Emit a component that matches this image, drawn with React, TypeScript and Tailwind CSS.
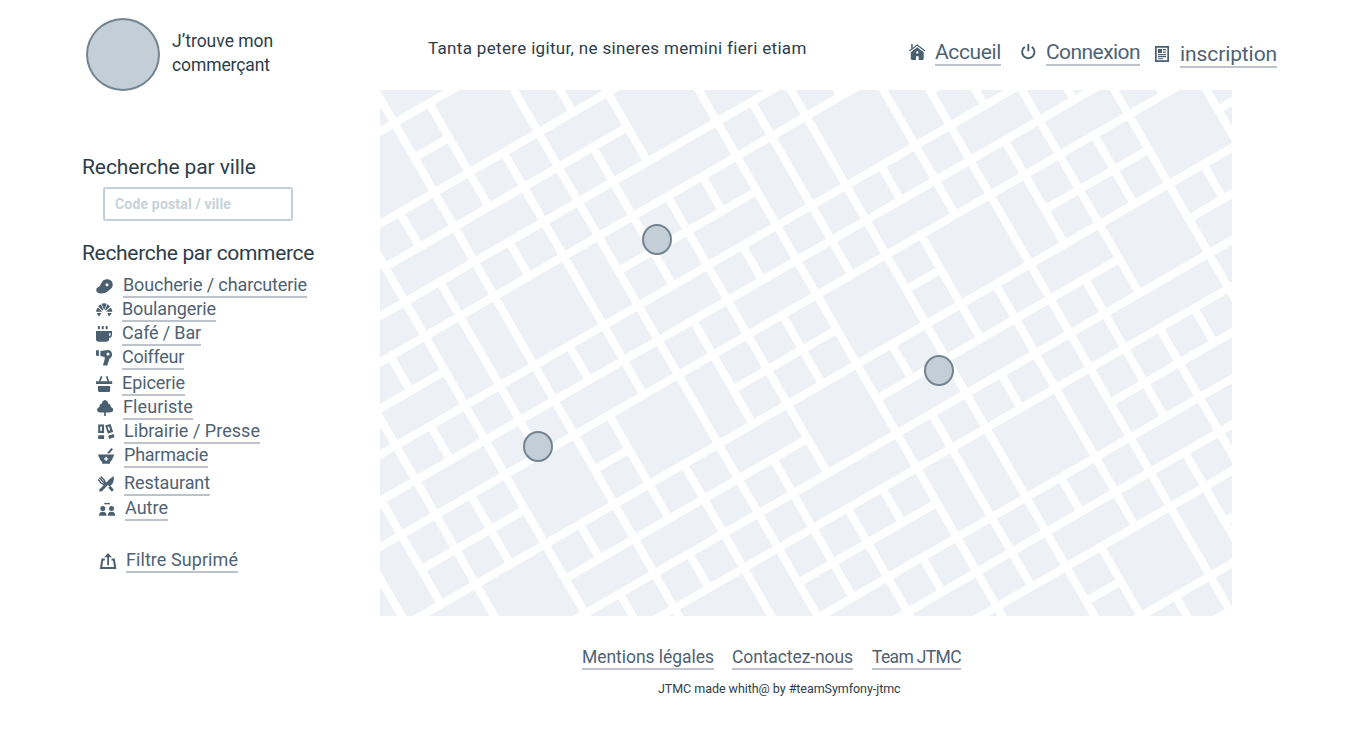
import type { ReactNode } from "react";

type Block = [number, number, number, number];

/* City blocks of one 9 × 9 tile: column, row, width, height in cells. */
const TILE: Block[] = [
  [0, 0, 2, 2], [2, 0, 1, 2], [3, 0, 1, 1], [4, 0, 1, 1], [5, 0, 1, 1], [6, 0, 2, 2], [8, 0, 1, 1],
  [3, 1, 1, 1], [4, 1, 1, 1], [5, 1, 1, 1], [8, 1, 1, 1],
  [0, 2, 1, 1], [1, 2, 1, 1], [2, 2, 2, 1], [4, 2, 2, 2], [6, 2, 1, 1], [7, 2, 1, 1], [8, 2, 1, 1],
  [1, 3, 1, 1], [2, 3, 1, 1], [3, 3, 1, 1], [6, 3, 2, 1], [8, 3, 2, 1],
  [0, 4, 1, 1], [1, 4, 1, 1], [2, 4, 1, 1], [3, 4, 3, 1], [6, 4, 1, 1], [7, 4, 1, 1], [8, 4, 1, 1],
  [8, 5, 2, 2], [1, 5, 1, 2], [2, 5, 1, 1], [3, 5, 1, 1], [4, 5, 1, 1], [5, 5, 1, 1], [6, 5, 1, 2], [7, 5, 1, 2],
  [2, 6, 1, 1], [3, 6, 1, 1], [4, 6, 2, 1],
  [0, 7, 1, 1], [1, 7, 1, 1], [2, 7, 2, 1], [4, 7, 1, 1], [5, 7, 1, 1], [6, 7, 1, 1], [7, 7, 1, 1], [8, 7, 1, 1],
  [8, 8, 2, 1], [1, 8, 1, 1], [2, 8, 1, 1], [3, 8, 1, 1], [4, 8, 2, 1], [6, 8, 1, 1], [7, 8, 1, 1],
];

const CELL = 40;
const ROAD = 8;
const REPEATS = [-2, -1, 0, 1, 2];

function CityMap() {
  return (
    <svg width="852" height="526" viewBox="0 0 852 526" className="block">
      <g transform="translate(540.8 144.9) rotate(-30)" fill="#edf0f5">
        {REPEATS.flatMap((a) =>
          REPEATS.flatMap((b) =>
            TILE.map(([i, j, w, h]) => (
              <rect
                key={`${a}.${b}.${i}.${j}`}
                x={(a * 9 + i) * CELL + ROAD / 2}
                y={(b * 9 + j) * CELL + ROAD / 2}
                width={w * CELL - ROAD}
                height={h * CELL - ROAD}
              />
            )),
          ),
        )}
      </g>
    </svg>
  );
}

function Pin({ place }: { place: string }) {
  return <div className={`absolute h-[31px] w-[30px] rounded-[50%] border-2 border-[#738491] bg-[#c3ced7] ${place}`} />;
}

function Icon({ children, className = "" }: { children: ReactNode; className?: string }) {
  return (
    <svg width="17" height="17" viewBox="0 0 17 17" fill="#4a5f6f" className={`block shrink-0 overflow-visible ${className}`}>
      {children}
    </svg>
  );
}

const meat = (
  <path
    fillRule="evenodd"
    d="M11 .2C14.600.2 16.700 2.500 16.700 5.700c0 3.400-2.400 4.300-4 5.700-1.900 1.700-4.200 3.100-7.700 3.100C1.800 14.500.2 12.900.2 11c0-2.600 2.600-2.700 3.900-4.600C5.700 4 6.300.2 11 .2ZM11 4.200a1.500 1.500 0 1 0 0 3 1.500 1.500 0 0 0 0-3Z"
  />
);
const croissant = (
  <>
    <path d="M0 8.800C.3 7 .8 5.600 1.700 4.400L6 8.300 5.700 8.800ZM16.400 8.800c-.3-1.800-.8-3.200-1.700-4.400l-4.300 3.900.3.500Z" />
    <path d="M2.300 3.600C3 2.600 3.900 1.800 5 1.200L7.400 6.900C7 7.100 6.700 7.300 6.500 7.600ZM14.100 3.600c-.7-1-1.600-1.800-2.700-2.400L9 6.900c.4.2.7.4.9.7Z" />
    <path d="M5.700.8Q8.200-.2 10.700.8L8.500 6.600H7.900Z" />
    <path d="M.9 10h4.200l-1.300 3C2.200 12.800 1.200 11.500.9 10ZM15.500 10h-4.200l1.300 3c1.600-.2 2.600-1.500 2.900-3Z" />
  </>
);
const cup = (
  <>
    <path d="M1.900 0h1.900v3.200H1.900ZM5.800 0h1.900v3.200H5.800ZM9.700 0h1.900v3.200H9.700Z" />
    <path fillRule="evenodd" d="M0 5h13.300v.1H16v3.500c0 2.300-1 3.400-2.900 3.400v1c0 1.700-1.200 2.800-2.900 2.800H2.900C1.200 15.800 0 14.700 0 13ZM13.200 7v3.200c1 0 1.300-.5 1.300-1.400V7Z" />
  </>
);
const dryer = (
  <>
    <path d="M0 .3h2.900v6L0 5.500Z" />
    <path fillRule="evenodd" d="M4.400 1 11.400 0c2.700-.2 4.700 1.800 4.700 4.500 0 2-1.100 3.500-2.700 4.300L11.300 15.500H6.900L8.700 9.200V7L4.400 6ZM12 2.600a1.500 1.500 0 1 0 0 3 1.500 1.500 0 0 0 0-3Z" />
  </>
);
const basket = (
  <>
    <path d="M0 5.300h16.200v2.600H0ZM2 10h12.200v4.200c0 1.100-.6 1.800-1.700 1.800H3.700C2.600 16 2 15.300 2 14.200Z" />
    <path d="M5.600.3 3.700 5.500M10.600.3l1.900 5.200" stroke="#4a5f6f" strokeWidth="1.7" />
  </>
);
const tree = (
  <path d="M8 0c1.900.4 3.100 1.600 3.200 3.400 1.800.5 2.800 1.900 2.500 3.500 1.600.6 2.500 1.500 2.500 2.900 0 1.700-1.500 2.800-3.800 2.800H8.900V16H7.200v-3.400H3.800C1.500 12.600 0 11.500 0 9.800c0-1.400.9-2.300 2.500-2.900C2.200 5.300 3.200 3.900 4.800 3.400 5 1.600 6.200.4 8 0Z" />
);
const books = (
  <>
    <path fillRule="evenodd" d="M.2.5h5.900v8.600H.2ZM2.200 2.500v4.200h1.800V2.500ZM.2 11.200h5.900v3.800H.2Z" />
    <path fillRule="evenodd" d="M7.200 1.500 12.500 0l2.700 7.900-5.400 1.700ZM9.600 3l1.200 3.800 1.500-.5-1.200-3.700ZM10.200 11.700l5.500-1.700.8 3.200-5.400 1.800Z" />
  </>
);
const mortar = (
  <>
    <path d="m13.400 0 1.500 1.200-3.200 4.100H8.900Z" />
    <path fillRule="evenodd" d="M0 6.400h16.200l-.8 2.700H15c-.4 2.500-1.500 4-3 4.800v1.800H4.200v-1.800C2.700 13 1.600 11.600 1.200 9.100H.8ZM7.500 8.800v1.500H6v1.300h1.500v1.500h1.300v-1.500h1.500v-1.300H8.800V8.800Z" />
  </>
);
const cutlery = (
  <>
    <path d="m.3 3.500 3 4 1.700.4 2 2 1.800-1.800-2-2-.3-1.800L2.800.6" fill="none" stroke="#4a5f6f" strokeWidth="1.400" />
    <path d="m1.400 1.700 4.800 5 1.200 1.600" stroke="#4a5f6f" strokeWidth="1.500" />
    <path d="m10.300 11.700 2-2 3.500 4-1.900 2Z" />
    <path d="M15.800.3v3.100c-.2 2.600-1.700 5.400-4.300 7L9.800 8.900l-6 6.700-2.500-.3-.2-1.500 8.300-8.300C11.400 3.200 13.300 1.400 15.800.3Z" />
  </>
);
const people = (
  <>
    <path d="M5.300-.1h5.600v1.400H5.300Z" />
    <circle cx="3.800" cy="5.500" r="2.500" />
    <circle cx="12.500" cy="5.500" r="2.500" />
    <path d="M0 12.700c0-2.700 1.200-4 3.800-4s3.700 1.300 3.700 4ZM8.700 12.700c0-2.700 1.200-4 3.800-4s3.700 1.300 3.700 4Z" />
  </>
);
const share = (
  <>
    <path d="M8 0 12 4.200H9v8H7.200v-8H4.200Z" />
    <path d="M4.800 6.400H2.400L1 15h14.200L13.900 6.400h-2.400" fill="none" stroke="#4a5f6f" strokeWidth="2" />
  </>
);
const house = (
  <>
    <path d="M2.200 0h1.500v3.700L2.200 5Z" />
    <path d="M.3 7 8.200 1.100 16.100 7" fill="none" stroke="#4a5f6f" strokeWidth="1.200" />
    <path fillRule="evenodd" d="m8.200 3.300 6.500 5v6.200c0 .8-.5 1.400-1.300 1.400H9.700V12.200H7v3.700H3.100c-.8 0-1.300-.6-1.300-1.400V8.300ZM8.300 7.200a1.200 1.200 0 1 0 0 2.400 1.200 1.200 0 0 0 0-2.400Z" />
  </>
);
const power = (
  <path d="M7.300 0v7.200M3.800 2.900a6.200 6.200 0 1 0 7 0" fill="none" stroke="#4a5f6f" strokeWidth="1.900" />
);
const newspaper = (
  <>
    <path fillRule="evenodd" d="M0 0h14v16H0ZM1.700 1.700v12.600h10.600V1.700Z" />
    <path d="M3 3h4v3.900H3ZM8 3h3v1.200H8ZM8 5.500h3v1.200H8ZM3 8h8v1.200H3ZM3 10.100h8v1.200H3ZM3 12.200h5v1.100H3Z" />
  </>
);

const trades: { label: string; icon: ReactNode; row: string; iconAt: string; text: string }[] = [
  { label: "Boucherie / charcuterie", icon: meat, row: "pl-[96px]", iconAt: "mt-[3px]", text: "ml-[10px] w-[184px] tracking-[-0.11px]" },
  { label: "Boulangerie", icon: croissant, row: "mt-[2px] pl-[96px]", iconAt: "mt-[3px]", text: "ml-[9px] w-[94px] tracking-[-0.11px]" },
  { label: "Café / Bar", icon: cup, row: "mt-[2px] pl-[96px]", iconAt: "mt-[2px]", text: "ml-[9px] w-[79px] tracking-[-0.16px]" },
  { label: "Coiffeur", icon: dryer, row: "mt-[2px] pl-[96px]", iconAt: "mt-[2px]", text: "ml-[9px] w-[62px] tracking-[-0.28px]" },
  { label: "Epicerie", icon: basket, row: "mt-[4px] pl-[96px]", iconAt: "mt-[2px]", text: "ml-[9px] w-[63px] tracking-[-0.09px]" },
  { label: "Fleuriste", icon: tree, row: "mt-[2px] pl-[97px]", iconAt: "mt-[2px]", text: "ml-[9px] w-[70px] tracking-[0.11px]" },
  { label: "Librairie / Presse", icon: books, row: "mt-[2px] pl-[98px]", iconAt: "mt-[2px]", text: "ml-[9px] w-[136px] tracking-[0.03px]" },
  { label: "Pharmacie", icon: mortar, row: "mt-[2px] pl-[98px]", iconAt: "mt-[2px]", text: "ml-[9px] w-[84px] tracking-[-0.23px]" },
  { label: "Restaurant", icon: cutlery, row: "mt-[6px] pl-[98px]", iconAt: "mt-[2px]", text: "ml-[9px] w-[86px] tracking-[-0.09px]" },
  { label: "Autre", icon: people, row: "mt-[3px] pl-[99px]", iconAt: "mt-[4px]", text: "ml-[9px] w-[43px]" },
  { label: "Filtre Suprimé", icon: share, row: "mt-[30px] pl-[100px]", iconAt: "mt-[2px]", text: "ml-[9px] w-[112px] tracking-[0.07px]" },
];

function Link({ children, className }: { children: ReactNode; className: string }) {
  return (
    <a href="#" className={`block whitespace-nowrap border-b-2 border-[#bdc3ca] text-[#4f6272] ${className}`}>
      {children}
    </a>
  );
}

export default function App() {
  return (
    <div className="h-[732px] w-[1364px] overflow-hidden bg-white font-[Roboto,sans-serif] text-[#2d3d4a]">
      <header className="flex h-[90px] items-start">
        <div className="ml-[86px] mt-[18px] h-[73px] w-[74px] shrink-0 rounded-[50%] border-2 border-[#738491] bg-[#c3ced7]" />
        <h1 className="ml-[12px] mt-[29px] w-[256px] text-[17.5px] leading-[24px]">
          <span className="block">J’trouve mon</span>
          <span className="block tracking-[-0.1px]">commerçant</span>
        </h1>
        <p className="mt-[38px] w-[481px] whitespace-nowrap text-[17px] leading-[20px] tracking-[0.33px]">
          Tanta petere igitur, ne sineres memini fieri etiam
        </p>
        <nav className="flex items-start text-[21px] leading-[24px]">
          <Icon className="mt-[44px]">{house}</Icon>
          <Link className="ml-[9px] mt-[40px] w-[66px] tracking-[-0.37px]">Accueil</Link>
          <Icon className="ml-[20px] mt-[44px]">{power}</Icon>
          <Link className="ml-[8px] mt-[40px] w-[94px] tracking-[-0.56px]">Connexion</Link>
          <Icon className="ml-[15px] mt-[46px]">{newspaper}</Icon>
          <Link className="ml-[8px] mt-[42px] w-[97px] tracking-[-0.1px]">inscription</Link>
        </nav>
      </header>

      <div className="flex h-[526px]">
        <aside className="w-[380px] shrink-0">
          <h2 className="ml-[82px] mt-[65px] whitespace-nowrap text-[21px] leading-[24px] tracking-[-0.1px]">Recherche par ville</h2>
          <input
            type="text"
            placeholder="Code postal / ville"
            className="ml-[103px] mt-[8px] block h-[34px] w-[190px] rounded-[3px] border-2 border-[#c3ced8] bg-white px-[10px] text-[14px] font-bold tracking-[0.17px] outline-none placeholder:text-[#c6d2dc]"
          />
          <h2 className="ml-[82px] mt-[20px] whitespace-nowrap text-[21px] leading-[24px] tracking-[-0.32px]">Recherche par commerce</h2>
          <ul className="mt-[11px]">
            {trades.map((t) => (
              <li key={t.label} className={`flex h-[22px] items-start text-[18px] leading-[18px] ${t.row}`}>
                <Icon className={t.iconAt}>{t.icon}</Icon>
                <Link className={`h-[22px] ${t.text}`}>{t.label}</Link>
              </li>
            ))}
          </ul>
        </aside>
        <main className="relative h-[526px] w-[852px] overflow-hidden bg-white">
          <CityMap />
          <Pin place="left-[262px] top-[134px]" />
          <Pin place="left-[544px] top-[265px]" />
          <Pin place="left-[143px] top-[341px]" />
        </main>
      </div>

      <footer className="pl-[582px] pt-[30px]">
        <div className="flex text-[17.5px] leading-[22px]">
          <Link className="w-[132px] tracking-[-0.04px]">Mentions légales</Link>
          <Link className="ml-[18px] w-[121px] tracking-[-0.1px]">Contactez-nous</Link>
          <Link className="ml-[19px] w-[89px] tracking-[-0.66px]">Team JTMC</Link>
        </div>
        <p className="ml-[76px] mt-[11px] whitespace-nowrap text-[12.5px] leading-[16px] tracking-[-0.05px]">JTMC made whith@ by #teamSymfony-jtmc</p>
      </footer>
    </div>
  );
}
